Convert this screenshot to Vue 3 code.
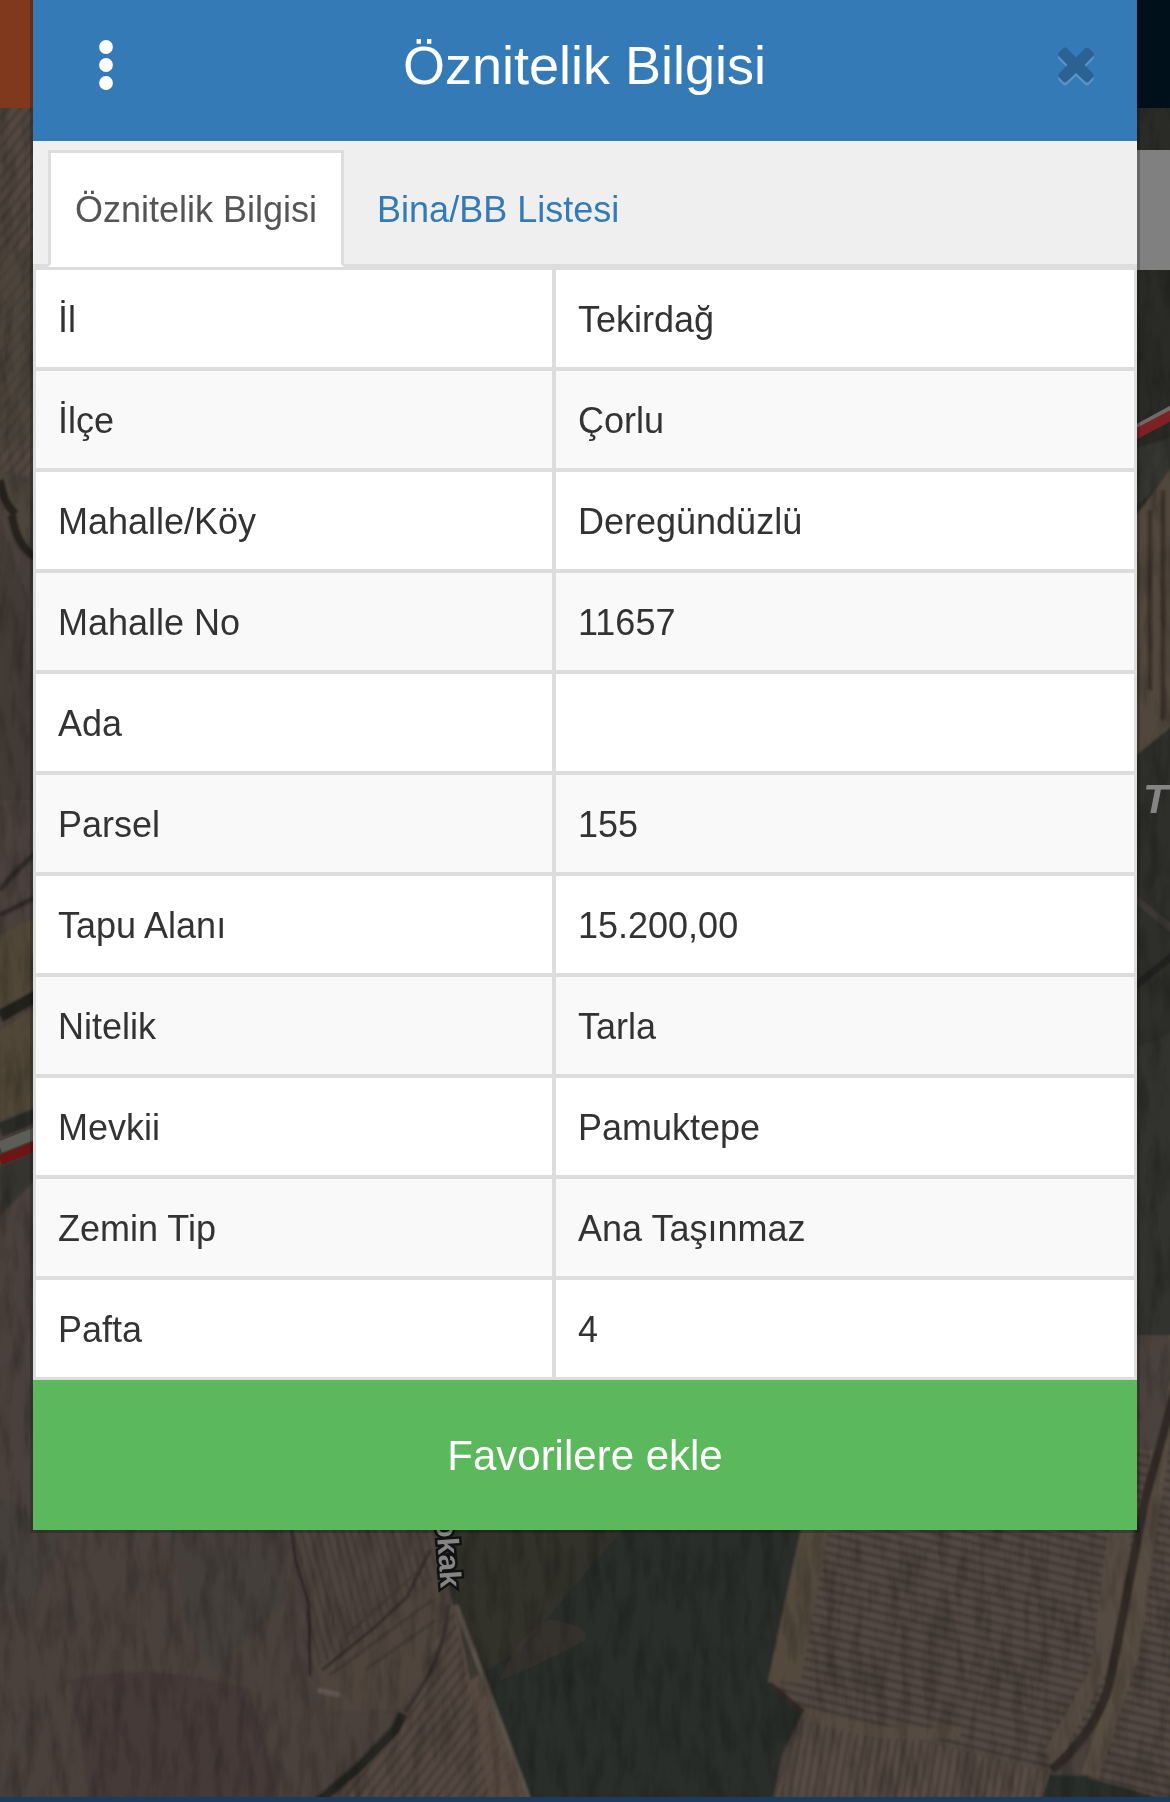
<template>
    <div class="page">
        <svg class="map" viewBox="0 0 1170 1802" width="1170" height="1802">
            <defs>
                <pattern id="rows" width="13" height="9" patternUnits="userSpaceOnUse" patternTransform="rotate(14)">
                    <rect width="13" height="9" fill="#534943" />
                    <rect width="13" height="3.5" fill="#443b35" />
                </pattern>
                <pattern id="cols" width="8" height="20" patternUnits="userSpaceOnUse" patternTransform="rotate(10)">
                    <rect width="8" height="20" fill="#564c45" />
                    <rect width="3" height="20" fill="#4b4039" />
                </pattern>
                <pattern id="diag" width="9" height="9" patternUnits="userSpaceOnUse" patternTransform="rotate(-52)">
                    <rect width="9" height="9" fill="#52473f" />
                    <rect width="9" height="3" fill="#473d37" />
                </pattern>
                <pattern id="steep" width="8" height="8" patternUnits="userSpaceOnUse" patternTransform="rotate(75)">
                    <rect width="8" height="8" fill="#50453f" />
                    <rect width="8" height="2.5" fill="#443935" />
                </pattern>
                <filter id="grain" x="0" y="0" width="100%" height="100%">
                    <feTurbulence type="fractalNoise" baseFrequency="0.08 0.02" numOctaves="4" seed="7" />
                    <feColorMatrix type="matrix" values="0 0 0 0 0  0 0 0 0 0  0 0 0 0 0  1.2 0 0 0 -0.5" />
                </filter>
                <filter id="soft"><feGaussianBlur stdDeviation="1.1" /></filter>
            </defs>
            <rect width="1170" height="1802" fill="#4b413c" />

            <g filter="url(#soft)">
                <!-- west side -->
                <path d="M0 100H40V480L0 470Z" fill="url(#diag)" />
                <path d="M0 250H40V440L0 450Z" fill="#4b4238" opacity=".6" />
                <path d="M0 470L40 490V580L0 500Z" fill="#4b453a" />
                <path d="M0 480Q4 505 16 514M12 515Q16 545 36 558" stroke="#27211f" stroke-width="8" fill="none" />
                <path d="M0 520L36 620V800H0Z" fill="#433b36" />
                <path d="M0 890Q20 865 40 850M0 915L40 895" stroke="#332a27" stroke-width="5" fill="none" />
                <path d="M0 935L40 915V990L0 1010ZM0 1030L40 1005V1105L0 1120Z" fill="#514639" />
                <path d="M0 1016L40 994" stroke="#22211d" stroke-width="12" />
                <path d="M0 1130L40 1114" stroke="#2b2c28" stroke-width="14" />
                <path d="M0 1166L40 1150V1175L0 1215Z" fill="#34342f" />

                <!-- south fields -->
                <path d="M0 1500L70 1530L30 1602H0Z" fill="#44403b" />
                <path d="M170 1520H290L285 1600L215 1670L185 1620Z" fill="#413f3b" opacity=".8" />
                <path d="M70 1680Q150 1660 250 1690L280 1802H90Z" fill="#453a37" opacity=".8" />
                <path d="M290 1520H438L445 1600L410 1640L310 1675Z" fill="url(#steep)" opacity=".8" />
                <path d="M316 1668L440 1575L440 1650L400 1710L330 1712Z" fill="#4f453d" />
                <path d="M345 1637L425 1565M330 1675L432 1600M365 1670L436 1620" stroke="#443a35" stroke-width="3" />
                <path d="M290 1520L296 1562L309 1605L310 1676" stroke="#30282a" stroke-width="3" fill="none" />
                <path d="M322 1670L375 1627L407 1597L430 1550" stroke="#372e2c" stroke-width="3" fill="none" />
                <path d="M318 1690L340 1695" stroke="#625750" stroke-width="5" />
                <path d="M450 1602L528 1802H318L350 1772L410 1712Z" fill="url(#diag)" />
                <path d="M452 1602L462 1630L530 1802H490Z" fill="#594c42" opacity=".7" />
                <path d="M448 1605Q447 1655 405 1712" stroke="#3a312d" stroke-width="4" fill="none" />
                <path d="M403 1714L395 1730L358 1768L318 1802" stroke="#272723" stroke-width="9" fill="none" />

                <!-- wet ground between the fields -->
                <path d="M436 1520H806L790 1602L768 1682L803 1712L782 1755L772 1802H527L452 1600Z" fill="#2c2e2b" />
                <path d="M460 1520H630L520 1650L470 1680L455 1602Z" fill="#34332d" opacity=".8" />
                <path d="M500 1680Q520 1630 550 1620Q590 1625 585 1640Q550 1660 500 1680Z" fill="#443a31" opacity=".4" />
                <path d="M456 1605L530 1802" stroke="#5a5148" stroke-width="5" />

                <!-- east fields -->
                <path d="M803 1520H1142L1112 1690L1050 1772L805 1710L768 1680Z" fill="url(#rows)" />
                <path d="M803 1520L768 1680L800 1684L830 1520Z" fill="#53483e" />
                <path d="M1110 1520H1136L1110 1665L1055 1770L1045 1750L1090 1670Z" fill="#564b42" />
                <path d="M770 1684L803 1712" stroke="#352b27" stroke-width="5" />
                <path d="M804 1712L1050 1772L1040 1802H774Z" fill="url(#cols)" />
                <path d="M804 1712Q870 1740 960 1732" stroke="#564b40" stroke-width="12" fill="none" />
                <path d="M1050 1775L1092 1776L1180 1806H1040Z" fill="#2b2d2a" />
                <path d="M1137 1360H1180V1802L1088 1778L1125 1660Z" fill="url(#rows)" />
                <path d="M1180 1330L1152 1500L1130 1655L1090 1776" stroke="#594d43" stroke-width="18" fill="none" />
                <path d="M1175 1390L1145 1500L1122 1620L1109 1685Q1097 1730 1052 1770" stroke="#322c28" stroke-width="9" fill="none" />

                <!-- east side -->
                <path d="M1130 100H1180V470L1130 520Z" fill="#2a2c28" />
                <path d="M1130 450L1180 435V470L1130 510Z" fill="#343630" />
                <path d="M1130 525L1180 455V735L1130 765Z" fill="#51463d" />
                <path d="M1150 510V690M1163 490V720" stroke="#3c322c" stroke-width="5" />
                <path d="M1130 760L1180 720V1335H1130Z" fill="#2d2e29" />
                <path d="M1130 1050L1180 1030V1335H1130Z" fill="#32332d" />
                <path d="M1130 990L1180 950" stroke="#222420" stroke-width="7" />
                <path d="M1130 895L1180 935" stroke="#3c3936" stroke-width="7" />
                <path d="M1130 1335L1180 1340L1155 1450H1130Z" fill="#4c423d" />
            </g>
            <rect width="1170" height="1802" filter="url(#grain)" opacity=".4" />

            <path d="M0 1147L36 1133" stroke="#5c5d57" stroke-width="11" />
            <path d="M0 1160L36 1146" stroke="#6c1515" stroke-width="10" />
            <path d="M1134 429L1172 408" stroke="#6c6b68" stroke-width="6" />
            <path d="M1134 435L1172 415" stroke="#7c2224" stroke-width="10" />
            <text class="place" x="1143" y="813">T</text>
            <text class="street" transform="translate(436 1520) rotate(86)">okak</text>

            <rect width="60" height="108" fill="#80391c" />
            <rect x="1110" width="60" height="108" fill="#00101b" />
            <rect x="1110" y="150" width="60" height="120" fill="#808080" />
            <rect y="1797" width="1170" height="5" fill="#1b3c5c" />
        </svg>

        <div class="modal">
            <div class="modal--header">
                <button class="menu" aria-label="Menü">
                    <svg width="14" height="50" viewBox="0 0 14 50">
                        <circle cx="7" cy="7" r="6.9" />
                        <circle cx="7" cy="25" r="6.9" />
                        <circle cx="7" cy="43" r="6.9" />
                    </svg>
                </button>
                <h4>Öznitelik Bilgisi</h4>
                <button class="close" aria-label="Kapat">
                    <svg width="36" height="39" viewBox="0 0 36 39">
                        <path class="shine" d="M7 0.5Q8 0.5 9 1.5L18 10.5L27 1.5Q29 -0.2 31 1.5L34.8 5.3Q36.8 7.5 34.8 9.5L26.5 18L34.8 26.5Q36.8 28.5 34.8 30.5L31 34.5Q29 36.5 27 34.5L18 26L9 34.5Q7 36.5 5 34.5L1.2 30.5Q-0.8 28.5 1.2 26.5L9.5 18L1.2 9.5Q-0.8 7.5 1.2 5.3L5 1.5Q6 0.5 7 0.5Z" transform="translate(0 3)" />
                        <path class="cross" d="M7 0.5Q8 0.5 9 1.5L18 10.5L27 1.5Q29 -0.2 31 1.5L34.8 5.3Q36.8 7.5 34.8 9.5L26.5 18L34.8 26.5Q36.8 28.5 34.8 30.5L31 34.5Q29 36.5 27 34.5L18 26L9 34.5Q7 36.5 5 34.5L1.2 30.5Q-0.8 28.5 1.2 26.5L9.5 18L1.2 9.5Q-0.8 7.5 1.2 5.3L5 1.5Q6 0.5 7 0.5Z" />
                    </svg>
                </button>
            </div>
            <div class="tabs">
                <a v-for="(tab, i) in tabs" :key="tab" :class="{ active: i == current }" @click="current = i">{{ tab }}</a>
            </div>
            <table>
                <tbody>
                    <tr v-for="row in rows" :key="row[0]">
                        <td>{{ row[0] }}</td>
                        <td>{{ row[1] }}</td>
                    </tr>
                </tbody>
            </table>
            <button class="favorite">Favorilere ekle</button>
        </div>
    </div>
</template>

<script setup>
    import { ref } from 'vue'

    const tabs = ['Öznitelik Bilgisi', 'Bina/BB Listesi']
    const current = ref(0)

    const rows = [
        ['İl', 'Tekirdağ'],
        ['İlçe', 'Çorlu'],
        ['Mahalle/Köy', 'Deregündüzlü'],
        ['Mahalle No', '11657'],
        ['Ada', ''],
        ['Parsel', '155'],
        ['Tapu Alanı', '15.200,00'],
        ['Nitelik', 'Tarla'],
        ['Mevkii', 'Pamuktepe'],
        ['Zemin Tip', 'Ana Taşınmaz'],
        ['Pafta', '4'],
    ]
</script>

<style>
    body {
        margin:0;
        background:#3a342f;
    }
</style>

<style scoped>
    .page {
        position:relative;
        width:1170px;
        height:1802px;
        overflow:hidden;
        font-family:"Liberation Sans", Arial, sans-serif;
        font-size:36px;
        color:#333;
    }
    .map {
        position:absolute;
        top:0;
        left:0;
        display:block;
    }
    .place {
        font-size:41px;
        font-style:italic;
        font-weight:bold;
        fill:#858585;
    }
    .street {
        font-size:30px;
        font-weight:bold;
        fill:#858585;
        stroke:#111;
        stroke-width:5px;
        paint-order:stroke;
    }
    .modal {
        position:relative;
        width:1104px;
        margin:0 33px;
        background:#fff;
        box-shadow:0 0 0 3px rgba(0,0,0,.2);
    }
    button {
        border:0;
        padding:0;
        background:none;
        font-family:inherit;
    }
    .modal--header {
        display:flex;
        justify-content:space-between;
        align-items:flex-start;
        box-sizing:border-box;
        height:141px;
        padding:40px 43px 0 66px;
        background:#337ab7;
        color:#fff;
    }
    .modal--header h4 {
        margin:-5px 2px 0 0;
        font-size:54px;
        font-weight:normal;
        line-height:60px;
    }
    .menu {
        width:14px;
    }
    .menu svg {
        display:block;
        fill:#fff;
    }
    .close {
        padding-top:7px;
    }
    .close svg {
        display:block;
    }
    .shine {
        fill:#5c95c5;
    }
    .cross {
        fill:#2a6293;
    }
    .tabs {
        display:flex;
        gap:6px;
        box-sizing:border-box;
        height:126px;
        padding:9px 15px 0;
        background:#efefef;
        border-bottom:3px solid #ddd;
    }
    .tabs a {
        box-sizing:border-box;
        height:117px;
        padding:0 24px;
        border:3px solid transparent;
        line-height:113px;
        color:#337ab7;
        cursor:pointer;
    }
    .tabs a.active {
        background:#fff;
        border-color:#ddd;
        border-bottom-color:#fff;
        color:#555;
    }
    table {
        width:100%;
        border-spacing:0;
        table-layout:fixed;
        border:3px solid #ddd;
        box-sizing:border-box;
    }
    td {
        box-sizing:border-box;
        height:101px;
        padding:2px 22px 0;
        line-height:95px;
        border-bottom:4px solid #ddd;
    }
    td:first-child {
        width:520px;
        border-right:4px solid #ddd;
    }
    tr:nth-child(even) {
        background:#f9f9f9;
    }
    tr:last-child td {
        height:97px;
        border-bottom:0;
    }
    .favorite {
        display:block;
        width:100%;
        height:150px;
        padding-top:2px;
        background:#5cb85c;
        color:#fff;
        font-size:42px;
    }
</style>
